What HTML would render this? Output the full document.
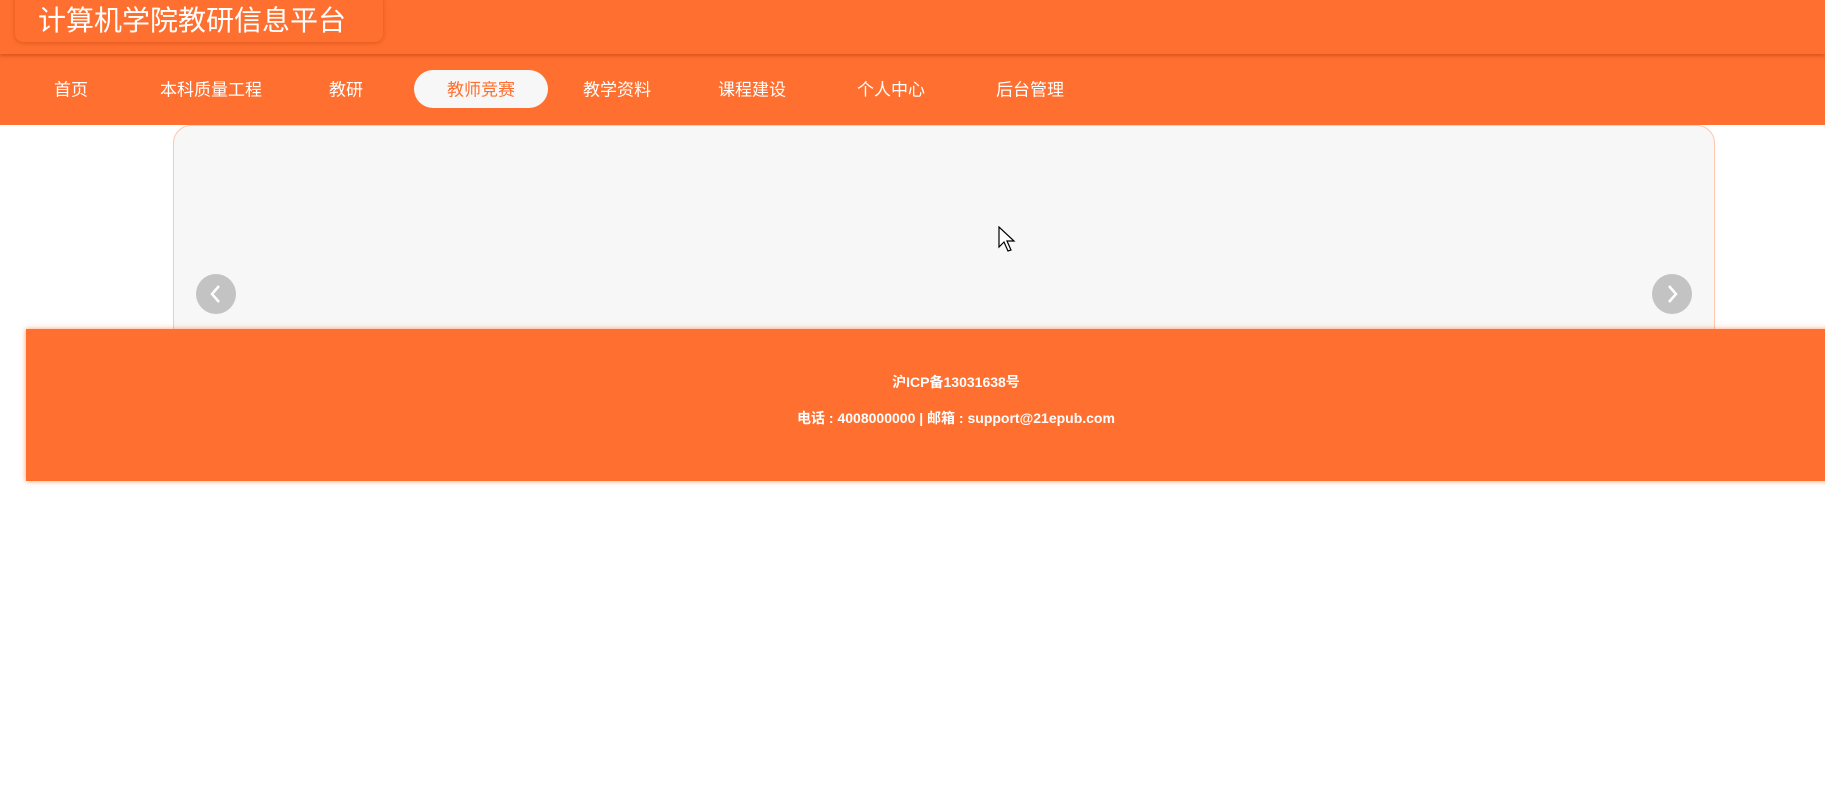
<!DOCTYPE html>
<html><head><meta charset="utf-8"><style>
*{margin:0;padding:0;box-sizing:border-box}
body{width:1825px;height:795px;background:#fff;font-family:"Liberation Sans","Noto Sans CJK SC",sans-serif;position:relative;overflow:hidden}
.top{position:absolute;left:0;top:0;width:1825px;height:54px;background:#ff6f2f;z-index:2;box-shadow:0 2px 3px rgba(190,70,20,.6)}
.title{position:absolute;left:15px;top:-6px;width:368px;height:48px;border-radius:8px;box-shadow:0 1px 4px rgba(170,60,10,.45);color:#fff;font-size:28px;line-height:46px;padding-left:23px;padding-top:4px;white-space:nowrap}
.nav{position:absolute;left:0;top:54px;width:1825px;height:71px;background:#ff6f2f}
.nav span{position:absolute;top:34px;transform:translate(-50%,-50%);color:#fff;font-size:17px;white-space:nowrap}
.pill{position:absolute;left:414px;top:16px;width:134px;height:38px;border-radius:19px;background:#f7f7f7}
.nav span.act{color:#ff6f2f}
.card{position:absolute;left:173px;top:125px;width:1542px;height:260px;background:#f7f7f7;border:1px solid #ffc7ad;border-radius:18px}
.arr{position:absolute;top:274px;width:40px;height:40px;border-radius:50%;background:#c3c3c3}
.foot{position:absolute;left:26px;top:329px;width:1820px;height:152px;background:#ff6f2f;box-shadow:0 0 5px rgba(255,111,47,.7);color:#fff;font-weight:bold;font-size:14px;text-align:center}
.foot p{position:absolute;width:1860px;transform:translateX(-50%);left:930px}
</style></head><body>
<div class="top"><div class="title">计算机学院教研信息平台</div></div>
<div class="nav">
<div class="pill"></div>
<span style="left:71px">首页</span>
<span style="left:211px">本科质量工程</span>
<span style="left:346px">教研</span>
<span class="act" style="left:481px">教师竞赛</span>
<span style="left:617px">教学资料</span>
<span style="left:752px">课程建设</span>
<span style="left:891px">个人中心</span>
<span style="left:1030px">后台管理</span>
</div>
<div class="card"></div>
<div class="arr" style="left:196px"><svg width="40" height="40"><path d="M23 12 L16 20 L23 28" stroke="#fff" stroke-width="2.5" fill="none"/></svg></div>
<div class="arr" style="left:1652px"><svg width="40" height="40"><path d="M17 12 L24 20 L17 28" stroke="#fff" stroke-width="2.5" fill="none"/></svg></div>
<svg style="position:absolute;left:998px;top:226px" width="20" height="30"><path d="M1 1 L1 21 L6 16 L10 25 L13 24 L9 15 L16 15 Z" fill="#fff" stroke="#000" stroke-width="1.2"/></svg>
<div class="foot">
<p style="top:43px">沪ICP备13031638号</p>
<p style="top:79px">电话 : 4008000000 | 邮箱 : support@21epub.com</p>
</div>
</body></html>
